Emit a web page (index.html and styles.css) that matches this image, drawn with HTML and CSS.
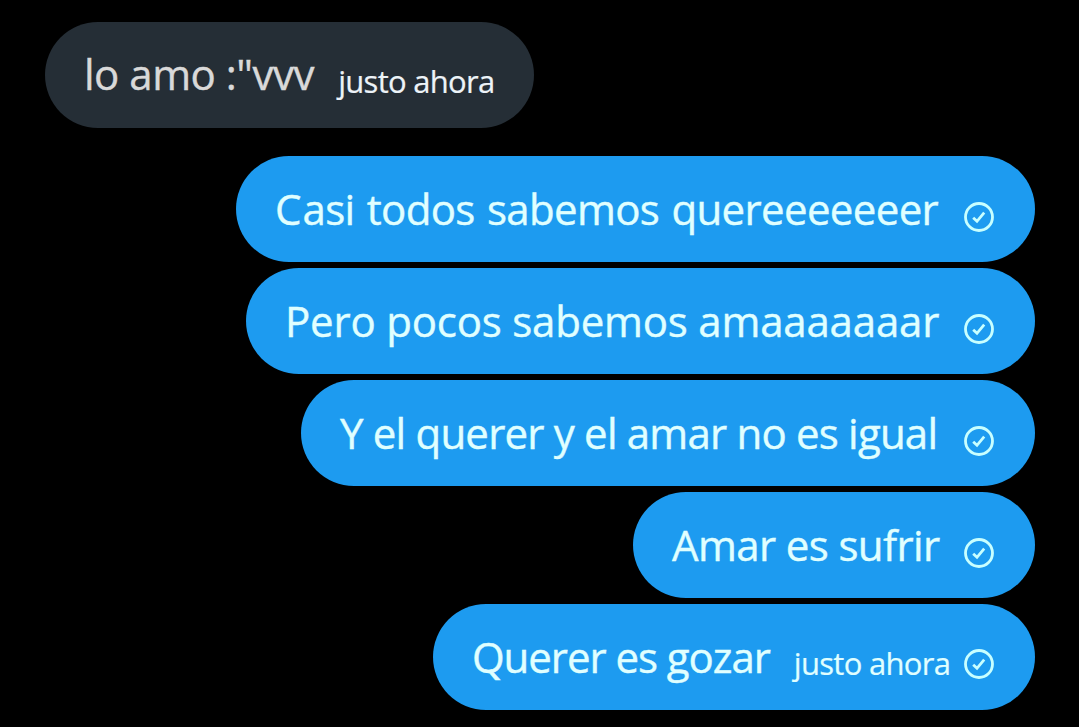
FILE: index.html
```html
<!DOCTYPE html>
<html lang="es">
<head>
    <meta charset="UTF-8">
    <meta name="viewport" content="width=device-width, initial-scale=1.0">
    <title>Mensajes</title>
    <link rel="stylesheet" href="styles.css">
</head>
<body>
    <svg class="symbols">
        <symbol id="check" viewBox="0 0 30 30">
            <circle cx="15" cy="15" r="13.5" />
            <path d="M9.2 15.7 L13 19.3 L20.2 10.7" />
        </symbol>
    </svg>

    <div class="chat">
        <!-- Recibido -->
        <div class="bubble received">
            <span class="text">lo amo :"vvv</span>
            <span class="time">justo ahora</span>
        </div>

        <!-- Enviados -->
        <div class="bubble sent casi">
            <span class="text">Casi todos sabemos quereeeeeeer</span>
            <svg class="check"><use href="#check" /></svg>
        </div>
        <div class="bubble sent pero">
            <span class="text">Pero pocos sabemos amaaaaaaar</span>
            <svg class="check"><use href="#check" /></svg>
        </div>
        <div class="bubble sent igual">
            <span class="text">Y el querer y el amar no es igual</span>
            <svg class="check"><use href="#check" /></svg>
        </div>
        <div class="bubble sent sufrir">
            <span class="text">Amar es sufrir</span>
            <svg class="check"><use href="#check" /></svg>
        </div>
        <div class="bubble sent gozar">
            <span class="text">Querer es gozar</span>
            <span class="time">justo ahora</span>
            <svg class="check"><use href="#check" /></svg>
        </div>
    </div>
</body>
</html>
```

FILE: styles.css
```css
* { box-sizing: border-box; }
body {
    margin: 0;
    height: 727px;
    overflow: hidden;
    background-color: #000;
    font-family: "Open Sans", "Noto Sans", sans-serif;
}
.symbols { display: none; }
.chat {
    display: flex;
    flex-direction: column;
    align-items: flex-end;
    gap: 6px;
    padding: 22px 44px 17px 45px;
}
.bubble {
    display: flex;
    align-items: center;
    height: 106px;
    border-radius: 53px;
    padding: 0 41px 0 39px;
    white-space: nowrap;
}
.received {
    align-self: flex-start;
    width: 489px;
    margin-bottom: 22px;
    background-color: #252e36;
    color: #d9d9d9;
}
.sent {
    background-color: #1d9bf0;
    color: #e0ffff;
}
.text {
    padding-bottom: 1px;
    font-size: 42px;
    line-height: 60px;
    -webkit-text-stroke: 0.4px currentColor;
}
.time {
    margin-left: 24px;
    padding-top: 11px;
    font-size: 31px;
    line-height: 44px;
    letter-spacing: -0.7px;
    -webkit-text-stroke: 0.2px currentColor;
}
.received .text { padding-bottom: 2px; letter-spacing: -0.48px; }
.received .time { color: #edf3f8; }
.check {
    flex: none;
    width: 30px;
    height: 30px;
    margin: 15px 0 0 auto;
    fill: none;
    stroke: #c8ffff;
    stroke-width: 2.8;
}
.casi { width: 799px; }
.casi .text { letter-spacing: -0.65px; word-spacing: 2px; }
.casi .text::first-letter { letter-spacing: 1px; }
.pero { width: 789px; }
.pero .text { letter-spacing: -0.2px; }
.igual { width: 734px; }
.igual .text { letter-spacing: -0.8px; }
.sufrir { width: 402px; }
.sufrir .text { letter-spacing: -0.62px; }
.gozar { width: 602px; }
.gozar .text { letter-spacing: -1.05px; }
.gozar .check { margin-top: 14px; }
```
